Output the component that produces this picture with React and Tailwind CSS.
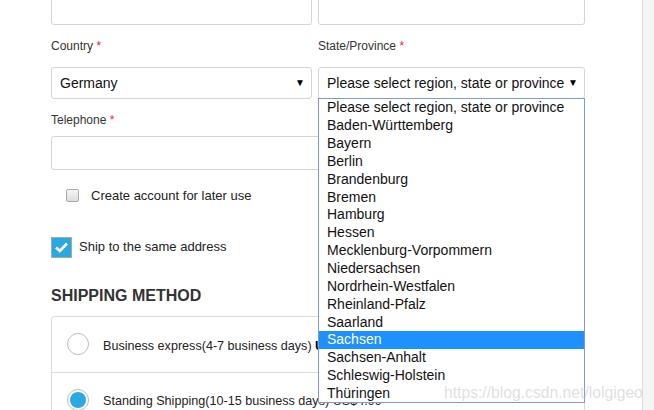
import React from "react";

const regions = [
  "Please select region, state or province",
  "Baden-Württemberg",
  "Bayern",
  "Berlin",
  "Brandenburg",
  "Bremen",
  "Hamburg",
  "Hessen",
  "Mecklenburg-Vorpommern",
  "Niedersachsen",
  "Nordrhein-Westfalen",
  "Rheinland-Pfalz",
  "Saarland",
  "Sachsen",
  "Sachsen-Anhalt",
  "Schleswig-Holstein",
  "Thüringen",
];

function Label({ children }) {
  return (
    <div className="text-[12px] leading-[16px] text-[#333]">
      {children} <span className="text-[#e02b27]">*</span>
    </div>
  );
}

function Arrow() {
  return <span className="text-[10px] leading-none text-black">▼</span>;
}

export default function App() {
  return (
    <div
      className="relative flex h-[410px] w-[654px] overflow-hidden bg-white"
      style={{ fontFamily: '"Liberation Sans", Arial, sans-serif' }}
    >
      <div className="w-[643px] shrink-0 border-r border-[#dcdcdc] bg-white pl-[51px]">
        <div className="w-[534px]">
          {/* top inputs (cut off) */}
          <div className="mt-[-9px] grid grid-cols-[261px_267px] gap-x-[6px]">
            <div className="h-[34px] rounded-[3px] border border-[#d5d5d5]" />
            <div className="h-[34px] rounded-[3px] border border-[#d5d5d5]" />
          </div>

          {/* country / state */}
          <div className="mt-[13px] grid grid-cols-[261px_267px] gap-x-[6px]">
            <Label>Country</Label>
            <Label>State/Province</Label>
            <div className="mt-[13px] flex h-[32px] items-center justify-between rounded-[3px] border border-[#d5d5d5] pl-[8px] pr-[6px] text-[14px] text-[#111]">
              <span>Germany</span>
              <Arrow />
            </div>
            <div className="relative mt-[13px]">
              <div className="flex h-[32px] items-center justify-between rounded-[3px] border border-[#d5d5d5] pl-[8px] pr-[6px] text-[14px] text-[#111]">
                <span>Please select region, state or province</span>
                <Arrow />
              </div>
              {/* open dropdown list */}
              <div className="absolute left-0 top-[31px] z-10 w-[267px] border border-[#7a9cd3] bg-white">
                {regions.map((r) => (
                  <div
                    key={r}
                    className={
                      r === "Sachsen"
                        ? "flex h-[17.85px] items-center bg-[#1e90ff] pl-[8px] text-[14px] text-white"
                        : "flex h-[17.85px] items-center pl-[8px] text-[14px] text-[#111]"
                    }
                  >
                    {r}
                  </div>
                ))}
              </div>
            </div>
          </div>

          {/* telephone */}
          <div className="mt-[13px]">
            <Label>Telephone</Label>
          </div>
          <div className="mt-[8px] h-[34px] w-[534px] rounded-[3px] border border-[#d5d5d5]" />

          {/* create account */}
          <div className="ml-[15px] mt-[16px] flex items-center gap-[12px]">
            <div className="h-[13px] w-[13px] rounded-[2px] border border-[#a9a9a9] bg-gradient-to-b from-[#f5f5f5] to-[#dedede]" />
            <span className="text-[13px] text-[#222]">Create account for later use</span>
          </div>

          {/* ship to same address */}
          <div className="mt-[31px] flex items-center gap-[7px]">
            <div className="flex h-[21px] w-[21px] items-center justify-center border-[1.5px] border-[#a9a9a9] bg-[#29a9e0]">
              <svg width="15" height="12" viewBox="0 0 15 12">
                <path d="M2 6.5 L5.8 10 L13 2.5" fill="none" stroke="white" strokeWidth="2.6" />
              </svg>
            </div>
            <span className="text-[13px] text-[#222]">Ship to the same address</span>
          </div>

          {/* shipping method */}
          <div className="mt-[28px] text-[16px] font-bold leading-[20px] text-[#333]">SHIPPING METHOD</div>

          <div className="mt-[10px] w-[534px] rounded-t-[3px] border border-[#dcdcdc]">
            <div className="flex h-[56px] items-center border-b border-[#dcdcdc] pl-[15px]">
              <div className="h-[22px] w-[22px] rounded-full border border-[#bdbdbd] bg-white" />
              <span className="ml-[14px] mt-[5px] text-[12.6px] text-[#222]">
                Business express(4-7 business days) <b className="text-black">US$19.99</b>
              </span>
            </div>
            <div className="flex h-[56px] items-start pl-[15px] pt-[16px]">
              <div className="flex h-[22px] w-[22px] items-center justify-center rounded-full border border-[#bdbdbd] bg-white">
                <div className="h-[16px] w-[16px] rounded-full bg-[#29a9e0]" />
              </div>
              <span className="ml-[14px] mt-[3px] text-[12.6px] text-[#222]">
                Standing Shipping(10-15 business days) US$4.99
              </span>
            </div>
          </div>
        </div>
      </div>
      <div className="flex-1 bg-[#f5f5f5]" />

      {/* watermark */}
      <div className="pointer-events-none absolute left-[444px] top-[383px] z-20 text-[15.7px] leading-[20px] text-[#d8d8d8]/80">
        https://blog.csdn.net/lolgigeo
      </div>
    </div>
  );
}
